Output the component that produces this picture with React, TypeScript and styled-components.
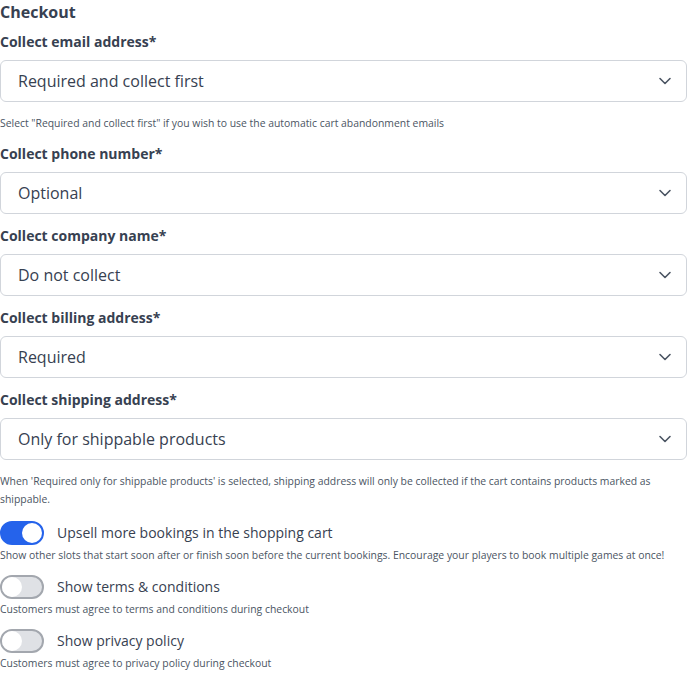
import { FC, useState } from 'react';
import styled, { createGlobalStyle } from 'styled-components';

const GlobalStyle = createGlobalStyle`
    body {
        margin: 0;
        background: #ffffff;
        font-family: "Open Sans", "Noto Sans", sans-serif;
        color: #374151;
    }
`;

const Page = styled.div`
    width: 687px;
    display: flex;
    flex-direction: column;
`;

const Title = styled.h2`
    margin: 0;
    font-size: 16px;
    line-height: 24px;
    font-weight: 700;
    color: #374151;
`;

const Field = styled.div`
    display: flex;
    flex-direction: column;
    margin-top: 12px;

    ${Title} + & {
        margin-top: 8px;
    }
`;

const Label = styled.label`
    font-size: 14px;
    line-height: 20px;
    font-weight: 700;
    color: #374151;
    margin-bottom: 8px;
`;

const SelectBox = styled.div`
    height: 42px;
    box-sizing: border-box;
    border: 1px solid #d1d5db;
    border-radius: 6px;
    padding: 0 14px 0 17px;
    display: flex;
    align-items: center;
    justify-content: space-between;
    font-size: 16px;
    color: #374151;
`;

const Help = styled.p`
    margin: 12px 0 0;
    font-size: 10.4px;
    line-height: 18px;
    color: #4b5563;
`;

const ToggleBlock = styled.div`
    margin-top: 11px;

    ${Field} + & {
        margin-top: 13px;
    }
`;

const ToggleRow = styled.div`
    display: flex;
    align-items: center;
    gap: 13px;
`;

const Track = styled.button<{ $on: boolean }>`
    width: 44px;
    height: 24px;
    padding: 0;
    border-radius: 12px;
    box-sizing: border-box;
    border: 2px solid ${p => (p.$on ? '#2563eb' : '#a3a7ae')};
    background: ${p => (p.$on ? '#2563eb' : '#dfe1e5')};
    display: flex;
    align-items: center;
    justify-content: ${p => (p.$on ? 'flex-end' : 'flex-start')};
    cursor: pointer;
`;

const Knob = styled.span`
    width: 20px;
    height: 20px;
    border-radius: 50%;
    background: #ffffff;
`;

const ToggleLabel = styled.span`
    font-size: 14px;
    line-height: 20px;
    color: #374151;
`;

const ToggleHelp = styled.p`
    margin: 1px 0 0;
    font-size: 10.4px;
    line-height: 18px;
    color: #4b5563;
`;

const Chevron = () => (
    <svg width="14" height="8" viewBox="0 0 14 8" fill="none" stroke="#4b5563" strokeWidth="1.6" strokeLinecap="round" strokeLinejoin="round">
        <path d="M2 1.5l5 5 5-5" />
    </svg>
);

interface ISelectField {
    label: string;
    value: string;
    help?: string;
}

const SelectField: FC<ISelectField> = ({ label, value, help }) => (
    <Field>
        <Label>{label}</Label>
        <SelectBox>
            <span>{value}</span>
            <Chevron />
        </SelectBox>
        {help && <Help>{help}</Help>}
    </Field>
);

interface IToggle {
    label: string;
    help: string;
    initial: boolean;
}

const ToggleField: FC<IToggle> = ({ label, help, initial }) => {
    const [on, setOn] = useState(initial);
    return (
        <ToggleBlock>
            <ToggleRow>
                <Track $on={on} onClick={() => setOn(!on)}>
                    <Knob />
                </Track>
                <ToggleLabel>{label}</ToggleLabel>
            </ToggleRow>
            <ToggleHelp>{help}</ToggleHelp>
        </ToggleBlock>
    );
};

const App: FC = () => (
    <Page>
        <GlobalStyle />
        <Title>Checkout</Title>
        <SelectField
            label="Collect email address*"
            value="Required and collect first"
            help={'Select "Required and collect first" if you wish to use the automatic cart abandonment emails'}
        />
        <SelectField label="Collect phone number*" value="Optional" />
        <SelectField label="Collect company name*" value="Do not collect" />
        <SelectField label="Collect billing address*" value="Required" />
        <SelectField
            label="Collect shipping address*"
            value="Only for shippable products"
            help="When 'Required only for shippable products' is selected, shipping address will only be collected if the cart contains products marked as shippable."
        />
        <ToggleField
            label="Upsell more bookings in the shopping cart"
            help="Show other slots that start soon after or finish soon before the current bookings. Encourage your players to book multiple games at once!"
            initial
        />
        <ToggleField
            label="Show terms & conditions"
            help="Customers must agree to terms and conditions during checkout"
            initial={false}
        />
        <ToggleField
            label="Show privacy policy"
            help="Customers must agree to privacy policy during checkout"
            initial={false}
        />
    </Page>
);

export default App;
